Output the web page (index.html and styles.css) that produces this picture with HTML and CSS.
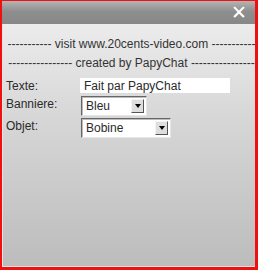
FILE: index.html
```html
<!DOCTYPE html>
<html lang="fr">
<head>
  <meta charset="UTF-8" />
  <title>PapyChat</title>
  <link rel="stylesheet" href="styles.css">
</head>
<body>
  <div class="frame">
    <div class="titlebar">
      <span class="close">&#x2715;</span>
    </div>

    <div class="panel">
      <div class="banner"><span>------------------- visit www.20cents-video.com -------------------</span></div>
      <div class="banner"><span>------------------------ created by PapyChat ------------------------</span></div>

      <div class="row row-text">
        <label>Texte:</label>
        <input type="text" class="field" value="Fait par PapyChat" />
      </div>

      <div class="row">
        <label>Banniere:</label>
        <div class="combo combo-short">
          <span class="combo-value">Bleu</span>
          <span class="combo-btn"><span class="arrow"></span></span>
        </div>
      </div>

      <div class="row">
        <label>Objet:</label>
        <div class="combo combo-long">
          <span class="combo-value">Bobine</span>
          <span class="combo-btn"><span class="arrow"></span></span>
        </div>
      </div>
    </div>
  </div>
</body>
</html>
```

FILE: styles.css
```css
html, body {
  margin: 0;
  padding: 0;
  width: 258px;
  height: 270px;
  overflow: hidden;
}

body {
  font-family: "Liberation Sans", Arial, sans-serif;
  font-size: 12px;
  color: #2a2a2a;
  background: #ff0000;
}

.frame {
  box-sizing: border-box;
  width: 258px;
  height: 270px;
  border: solid #f01010;
  border-width: 1px 3px 3px 2px;
  display: flex;
  flex-direction: column;
}

.titlebar {
  height: 23px;
  background: linear-gradient(#b4b4b4, #8e8e8e 45%, #878787);
  display: flex;
  justify-content: flex-end;
  align-items: center;
  padding-right: 8px;
}

.close {
  color: #fff;
  font-family: "DejaVu Sans", sans-serif;
  font-size: 19px;
  font-weight: bold;
  line-height: 1;
}

.panel {
  flex: 1;
  background: linear-gradient(#ececec, #d6d6d6 40%, #bcbcbc);
  box-shadow: inset 1px -1px 0 #e4e4e4;
  padding-top: 11px;
  overflow: hidden;
}

.banner {
  display: flex;
  justify-content: center;
  white-space: nowrap;
  overflow: hidden;
  margin-left: 6px;
  height: 19px;
  line-height: 19px;
  color: #333;
}

.row {
  display: flex;
  align-items: center;
  padding-left: 4px;
  margin-top: 2px;
}

.row label {
  width: 75px;
  margin-top: -4px;
}

.row-text {
  margin-top: 5px;
  margin-bottom: 3px;
}

.row-text label {
  width: 74px;
  margin-top: 0;
}

.field {
  box-sizing: border-box;
  width: 150px;
  height: 15px;
  border: none;
  padding: 0 0 0 4px;
  font: inherit;
  color: #2a2a2a;
  background: #fff;
}

.combo {
  box-sizing: border-box;
  height: 20px;
  background: #fff;
  border: 1px solid;
  border-color: #666 #e6e6e6 #e6e6e6 #666;
  box-shadow: inset 1px 1px 0 #bbb;
  display: flex;
  align-items: center;
  padding-right: 2px;
}

.combo-short {
  width: 66px;
}

.combo-long {
  width: 90px;
}

.combo-value {
  flex: 1;
  padding-left: 4px;
}

.combo-btn {
  box-sizing: border-box;
  width: 13px;
  height: 14px;
  background: #dedede;
  border: 1px solid;
  border-color: #f4f4f4 #555 #555 #f4f4f4;
  display: flex;
  align-items: center;
  justify-content: center;
}

.arrow {
  width: 0;
  height: 0;
  border-left: 3px solid transparent;
  border-right: 3px solid transparent;
  border-top: 4px solid #000;
}
```
